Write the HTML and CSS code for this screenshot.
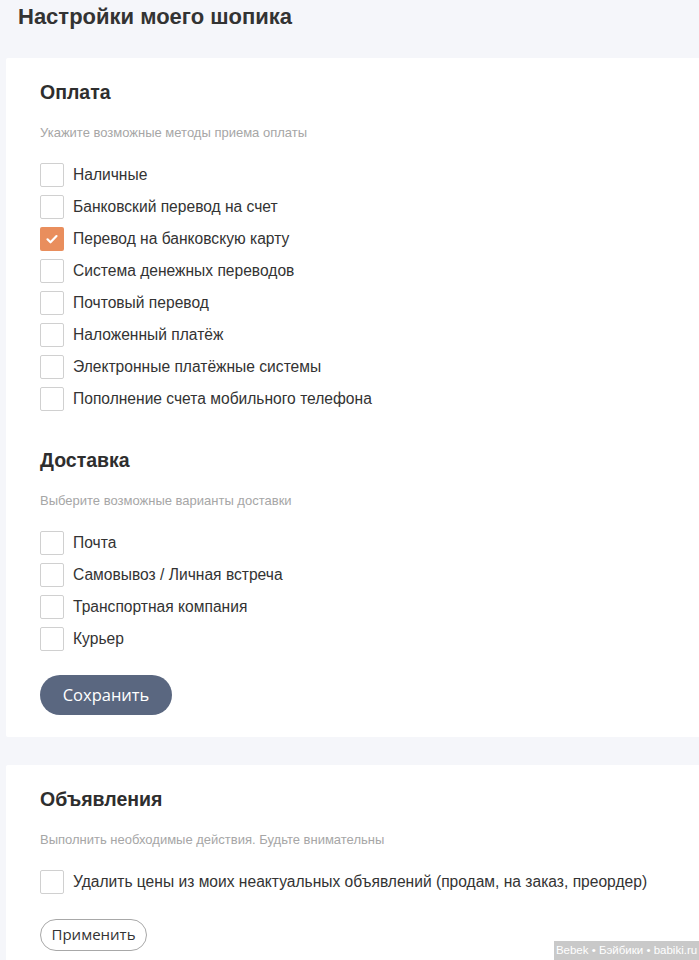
FILE: index.html
```html
<!DOCTYPE html>
<html lang="ru">
<head>
<meta charset="utf-8">
<title>Настройки моего шопика</title>
<link rel="stylesheet" href="styles.css">
</head>
<body>
<h1 class="page-title">Настройки моего шопика</h1>

<section class="card">
  <h2 class="sec-title">Оплата</h2>
  <p class="sec-hint">Укажите возможные методы приема оплаты</p>
  <ul class="checks">
    <li class="check"><span class="box"></span>Наличные</li>
    <li class="check"><span class="box"></span>Банковский перевод на счет</li>
    <li class="check"><span class="box box-on"><svg viewBox="0 0 24 24" width="24" height="24"><path d="M7.5 12.3l3 3 6-6.2" fill="none" stroke="#fff" stroke-width="2.2" stroke-linecap="round" stroke-linejoin="round"/></svg></span>Перевод на банковскую карту</li>
    <li class="check"><span class="box"></span>Система денежных переводов</li>
    <li class="check"><span class="box"></span>Почтовый перевод</li>
    <li class="check"><span class="box"></span>Наложенный платёж</li>
    <li class="check"><span class="box"></span>Электронные платёжные системы</li>
    <li class="check"><span class="box"></span>Пополнение счета мобильного телефона</li>
  </ul>

  <h2 class="sec-title sec-next">Доставка</h2>
  <p class="sec-hint">Выберите возможные варианты доставки</p>
  <ul class="checks">
    <li class="check"><span class="box"></span>Почта</li>
    <li class="check"><span class="box"></span>Самовывоз / Личная встреча</li>
    <li class="check"><span class="box"></span>Транспортная компания</li>
    <li class="check"><span class="box"></span>Курьер</li>
  </ul>
  <button class="btn-save" type="button">Сохранить</button>
</section>

<section class="card card-2">
  <h2 class="sec-title">Объявления</h2>
  <p class="sec-hint">Выполнить необходимые действия. Будьте внимательны</p>
  <ul class="checks">
    <li class="check"><span class="box"></span>Удалить цены из моих неактуальных объявлений (продам, на заказ, преордер)</li>
  </ul>
  <button class="btn-apply" type="button">Применить</button>
</section>

<div class="watermark">Bebek • Бэйбики • babiki.ru</div>
</body>
</html>
```
FILE: styles.css
```css
html, body {
  margin: 0;
  padding: 0;
  background: #f5f6fa;
}
body {
  font-family: "Liberation Sans", Arial, sans-serif;
  color: #333;
  padding-bottom: 40px;
}
.page-title {
  margin: 0;
  padding: 5px 18px 0;
  height: 53px;
  font-size: 22px;
  line-height: 24px;
  font-weight: bold;
  color: #333;
}
.card {
  background: #fff;
  margin-left: 6px;
  padding: 22px 34px 22px 34px;
  border-radius: 2px 0 0 2px;
}
.card-2 {
  margin-top: 28px;
}
.sec-title {
  margin: 0;
  font-size: 19.5px;
  line-height: 24px;
  font-weight: bold;
  color: #2e2e2e;
}
.sec-next {
  margin-top: 37px;
}
.sec-hint {
  margin: 21px 0 0;
  font-size: 13px;
  line-height: 16px;
  color: #a6a6a6;
}
.checks {
  list-style: none;
  margin: 22px 0 0;
  padding: 0;
  display: flex;
  flex-direction: column;
  gap: 8px;
}
.check {
  display: flex;
  align-items: center;
  gap: 9px;
  height: 24px;
  font-size: 15.6px;
  color: #333;
}
.box {
  box-sizing: border-box;
  width: 24px;
  height: 24px;
  border: 1px solid #d0d0d0;
  border-radius: 2px;
  background: #fff;
  flex: none;
}
.box-on {
  border: none;
  background: #e98e5d;
  display: flex;
}
.btn-save {
  margin-top: 24px;
  display: block;
  width: 132px;
  height: 40px;
  border: none;
  border-radius: 20px;
  background: #5a6780;
  color: #fff;
  font-family: "Open Sans", sans-serif;
  font-size: 16.5px;
  padding: 0 0 2px;
}
.btn-apply {
  margin-top: 25px;
  display: block;
  width: 107px;
  height: 32px;
  border: 1px solid #a8a8a8;
  border-radius: 16px;
  background: #fff;
  color: #333;
  font-family: "Open Sans", sans-serif;
  font-size: 15px;
  padding: 0 0 2px;
}
.watermark {
  position: fixed;
  right: 0;
  bottom: 0;
  width: 145px;
  height: 19px;
  background: #c9c9c9;
  color: #fff;
  font-family: "Liberation Sans", Arial, sans-serif;
  font-size: 11.5px;
  line-height: 19px;
  text-align: center;
}
```
